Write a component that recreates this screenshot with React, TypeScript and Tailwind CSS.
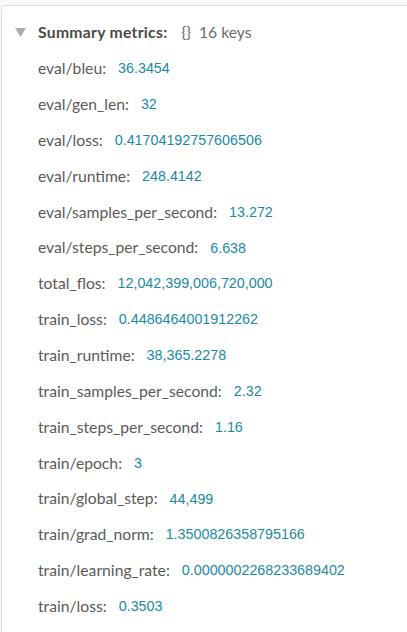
import React from "react";

const rows: [string, string][] = [
  ["eval/bleu", "36.3454"],
  ["eval/gen_len", "32"],
  ["eval/loss", "0.41704192757606506"],
  ["eval/runtime", "248.4142"],
  ["eval/samples_per_second", "13.272"],
  ["eval/steps_per_second", "6.638"],
  ["total_flos", "12,042,399,006,720,000"],
  ["train_loss", "0.4486464001912262"],
  ["train_runtime", "38,365.2278"],
  ["train_samples_per_second", "2.32"],
  ["train_steps_per_second", "1.16"],
  ["train/epoch", "3"],
  ["train/global_step", "44,499"],
  ["train/grad_norm", "1.3500826358795166"],
  ["train/learning_rate", "0.0000002268233689402"],
  ["train/loss", "0.3503"],
];

export default function App() {
  return (
    <div
      className="w-[407px] h-[632px] overflow-hidden bg-[#f8f8f8] pt-[5px] pl-[1px]"
      style={{ fontFamily: "Lato, 'Noto Sans', sans-serif" }}
    >
      <div className="h-[700px] w-[420px] bg-white border-l border-t border-[#dedede] rounded-tl-[4px]">
        <div className="flex items-center h-[37px] mt-[8px] pl-[13px] text-[15.7px]">
          <svg width="11" height="9" viewBox="0 0 11 9" className="mr-[12px]">
            <path d="M0 0 L11 0 L5.5 9 Z" fill="#a9adb3" />
          </svg>
          <span className="font-bold tracking-[0.3px] text-[#4a4a4a]">Summary metrics:</span>
          <span className="ml-[14px] text-[#6a6a6a]">{"{}"}</span>
          <span className="ml-[8px] text-[#6a6a6a]">16 keys</span>
        </div>
        <div className="flex flex-col pl-[36px] text-[15.7px]">
          {rows.map(([k, v]) => (
            <div key={k} className="h-[35.87px] flex items-center">
              <span className="text-[#5a5a5a]">{k}:</span>
              <span className="ml-[12px] text-[#1b8aa5] text-[14.3px] font-['Liberation_Sans',sans-serif]">
                {v}
              </span>
            </div>
          ))}
        </div>
      </div>
    </div>
  );
}
